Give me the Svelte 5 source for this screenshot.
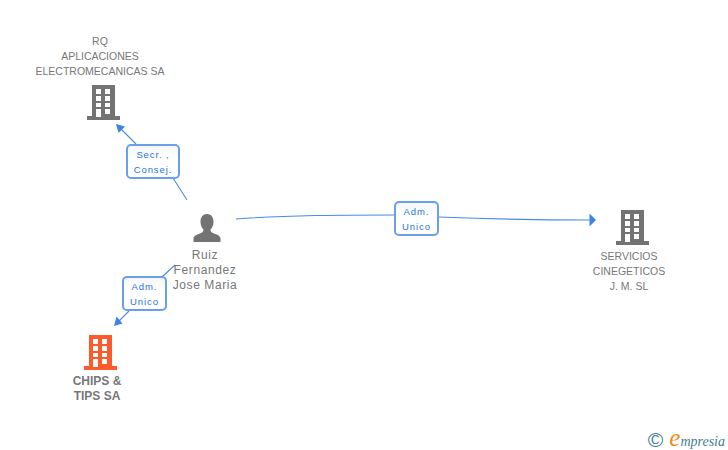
<script>
    const nodes = [
        {x: 103, y: 85, lines: ["RQ", "APLICACIONES", "ELECTROMECANICAS SA"], top: true},
        {x: 632, y: 210, lines: ["SERVICIOS", "CINEGETICOS", "J. M. SL"]},
        {x: 100, y: 335, lines: ["CHIPS &", "TIPS SA"], main: true}
    ];

    const labels = [
        {x: 126, y: 144, w: 54, h: 35, lines: ["Secr. ,", "Consej."]},
        {x: 394, y: 201, w: 45, h: 35, lines: ["Adm.", "Unico"]},
        {x: 122, y: 276, w: 45, h: 35, lines: ["Adm.", "Unico"]}
    ];
</script>

<div class="canvas">
    <svg class="links" width="728" height="450" viewBox="0 0 728 450">
        <g fill="none" stroke="#4a8ae6" stroke-width="1.1">
            <path d="M187 200 L173 178" />
            <path d="M136 144 L120 128" />
            <path d="M236 219 C290 215 340 215 394 215" />
            <path d="M439 217 C490 219 540 220 591 220" />
            <path d="M175 265 L162 277" />
            <path d="M129 311 L119 321" />
        </g>
        <g fill="#3f84e5">
            <path d="M116 124 L125 126.5 L118.5 133 Z" />
            <path d="M596 220 L589.5 213.5 L589.5 226.5 Z" />
            <path d="M114 326 L116.5 316.5 L122.500 323.500 Z" />
        </g>
    </svg>

    {#each nodes as node}
        <div class="node" class:main={node.main} class:top={node.top} style="left: {node.x - 80}px; top: {node.top ? 34 : node.y}px">
            {#if node.top}
                <div class="name">
                    {#each node.lines as line}<div>{line}</div>{/each}
                </div>
            {/if}
            <svg class="building" width="33" height="35" viewBox="0 0 33 35">
                <path fill-rule="evenodd" fill={node.main ? "#ff5a2c" : "#737373"} d="M5 0 H28 V31 H33 V35 H0 V31 H5 Z M9 4 V9 H14 V4 Z M18 4 V9 H23 V4 Z M9 11 V16 H14 V11 Z M18 11 V16 H23 V11 Z M9 18 V22 H14 V18 Z M18 18 V22 H23 V18 Z M9 24 V32 H14 V24 Z M18 24 V29 H23 V24 Z" />
            </svg>
            {#if !node.top}
                <div class="name">
                    {#each node.lines as line}<div>{line}</div>{/each}
                </div>
            {/if}
        </div>
    {/each}

    <div class="person">
        <svg width="28" height="28" viewBox="0 0 28 28">
            <path fill="#737373" d="M14 0 C18 0 20.500 3 20.500 7.500 C20.500 11 19.500 13.500 17.500 15.500 C17.500 17.500 18.500 18.500 21 19.500 C25 21 27.500 22 27.500 24.500 V28 H0.500 V24.500 C0.500 22 3 21 7 19.500 C9.500 18.500 10.500 17.500 10.500 15.500 C8.500 13.500 7.500 11 7.500 7.500 C7.500 3 10 0 14 0 Z" />
        </svg>
        <div class="name spaced">
            <div>Ruiz</div>
            <div>Fernandez</div>
            <div>Jose Maria</div>
        </div>
    </div>

    {#each labels as label}
        <div class="label" style="left: {label.x}px; top: {label.y}px; width: {label.w}px; height: {label.h}px">
            {#each label.lines as line}<div>{line}</div>{/each}
        </div>
    {/each}

    <div class="logo">
        <span class="copy">©</span>
        <span class="brand"><span class="e">e</span>mpresia</span>
    </div>
</div>

<style>
    :global(body) {
        background: #fff;
    }

    .canvas {
        position: relative;
        width: 728px;
        height: 450px;
        overflow: hidden;
        font-family: "Liberation Sans", Arial, sans-serif;
    }

    .links {
        position: absolute;
        left: 0;
        top: 0;
    }

    .node {
        position: absolute;
        width: 160px;
        display: flex;
        flex-direction: column;
        align-items: center;
    }

    .building {
        display: block;
    }

    .node.top .building {
        margin-top: 6px;
    }

    .node:not(.top) .name {
        margin-top: 4px;
    }

    .name {
        padding-right: 6px;
        font-size: 10.5px;
        line-height: 15px;
        color: #777;
        text-align: center;
        white-space: nowrap;
    }

    .node.main .name {
        font-weight: bold;
        font-size: 12px;
        color: #777;
    }

    .person {
        position: absolute;
        left: 144px;
        top: 214px;
        width: 126px;
        display: flex;
        flex-direction: column;
        align-items: center;
    }

    .person svg {
        display: block;
    }

    .person .name {
        margin-top: 6px;
        padding-right: 4px;
        font-size: 12px;
        letter-spacing: 0.6px;
    }

    .label {
        position: absolute;
        box-sizing: border-box;
        display: flex;
        flex-direction: column;
        justify-content: center;
        align-items: center;
        background: linear-gradient(#f4f6fa, #fff 40%);
        border: 2px solid #6a9fea;
        border-radius: 5px;
        color: #2a74e0;
        font-size: 9.5px;
        line-height: 15px;
        letter-spacing: 0.9px;
    }

    .logo {
        position: absolute;
        right: 3px;
        top: 424px;
        display: flex;
        align-items: center;
        gap: 6px;
        color: #3f7f93;
    }

    .copy {
        font-size: 21px;
        line-height: 28px;
    }

    .brand {
        font-family: "Liberation Serif", serif;
        font-style: italic;
        font-size: 14px;
        line-height: 28px;
    }

    .e {
        color: #f08a1d;
        font-size: 25px;
        line-height: 28px;
    }
</style>
